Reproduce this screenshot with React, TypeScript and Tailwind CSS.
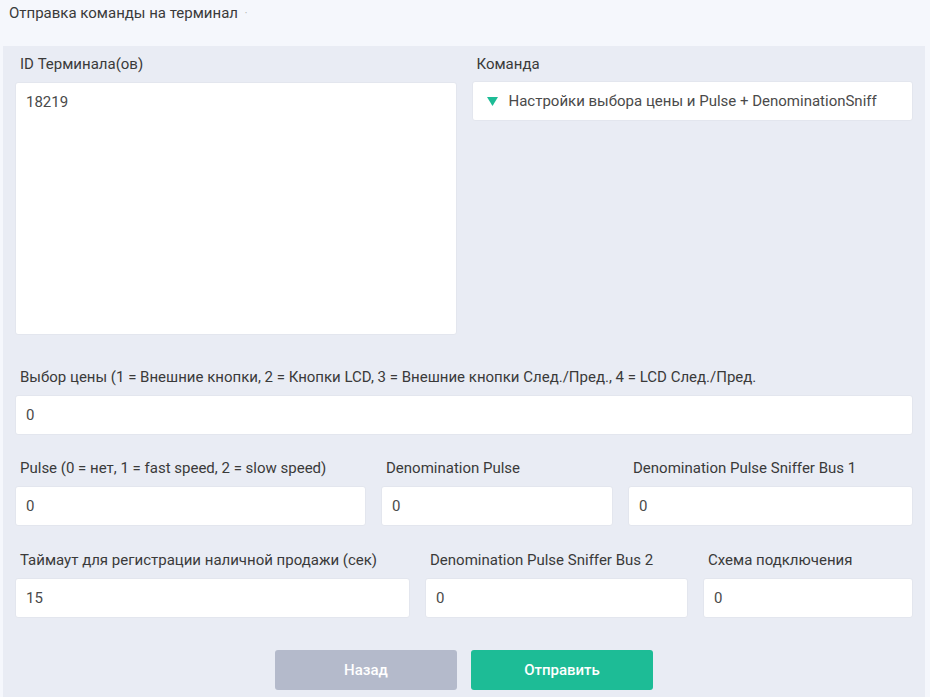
import React from "react";

const labelCls = "block h-5 pl-[5px] text-[15px] leading-5 text-[#3a3a3a] whitespace-nowrap mb-2";
const inputCls =
  "block w-full h-10 rounded-[3px] border border-[#e3e6ee] bg-white px-[10px] text-[15px] text-[#4a4a4a] outline-none";

function Field({ label, value, className = "" }: { label: string; value: string; className?: string }) {
  return (
    <div className={className}>
      <label className={labelCls}>{label}</label>
      <input className={inputCls} defaultValue={value} />
    </div>
  );
}

export default function App() {
  return (
    <div className="min-h-[697px] bg-[#f5f7fc] pr-[5px] font-['Roboto',sans-serif]">
      <div className="h-[46px] pl-[9px] pt-[3px] text-[15px] leading-5 text-[#3a3a3a]">
        Отправка команды на терминал <span className="ml-[3px] text-[#aaa] text-[10px] align-middle">·</span>
      </div>
      <div className="ml-[3px] min-h-[651px] bg-[#e9ecf4] px-3 pt-2 pb-6">
        <div className="grid grid-cols-2 gap-x-[15px]">
          <div>
            <label className={labelCls}>ID Терминала(ов)</label>
            <textarea
              className="block h-[253px] w-full resize-none rounded-[3px] border border-[#e3e6ee] bg-white px-[10px] pt-[9px] text-[15px] leading-5 text-[#4a4a4a] outline-none"
              defaultValue="18219"
            />
          </div>
          <div>
            <label className={labelCls}>Команда</label>
            <div className="flex h-10 -mt-px items-center gap-[11px] rounded-[3px] border border-[#e3e6ee] bg-white pl-[14px] text-[15px] text-[#4a4a4a]">
              <svg width="11" height="9" viewBox="0 0 11 9" className="shrink-0">
                <path d="M0 0 H11 L5.5 9 Z" fill="#1dbc96" />
              </svg>
              <span>Настройки выбора цены и Pulse + DenominationSniff</span>
            </div>
          </div>
        </div>

        <Field
          className="mt-8"
          label="Выбор цены (1 = Внешние кнопки, 2 = Кнопки LCD, 3 = Внешние кнопки След./Пред., 4 = LCD След./Пред."
          value="0"
        />

        <div className="mt-[23px] grid grid-cols-[351px_232px_1fr] gap-x-[15px]">
          <Field label="Pulse (0 = нет, 1 = fast speed, 2 = slow speed)" value="0" />
          <Field label="Denomination Pulse" value="0" />
          <Field label="Denomination Pulse Sniffer Bus 1" value="0" />
        </div>

        <div className="mt-6 grid grid-cols-[395px_263px_1fr] gap-x-[15px]">
          <Field label="Таймаут для регистрации наличной продажи (сек)" value="15" />
          <Field label="Denomination Pulse Sniffer Bus 2" value="0" />
          <Field label="Схема подключения" value="0" />
        </div>

        <div className="mt-8 flex justify-center gap-[14px]">
          <button className="h-10 w-[182px] rounded-[3px] bg-[#b4bacb] text-[15px] font-medium text-white">
            Назад
          </button>
          <button className="h-10 w-[182px] rounded-[3px] bg-[#1dbc96] text-[15px] font-medium text-white">
            Отправить
          </button>
        </div>
      </div>
    </div>
  );
}
